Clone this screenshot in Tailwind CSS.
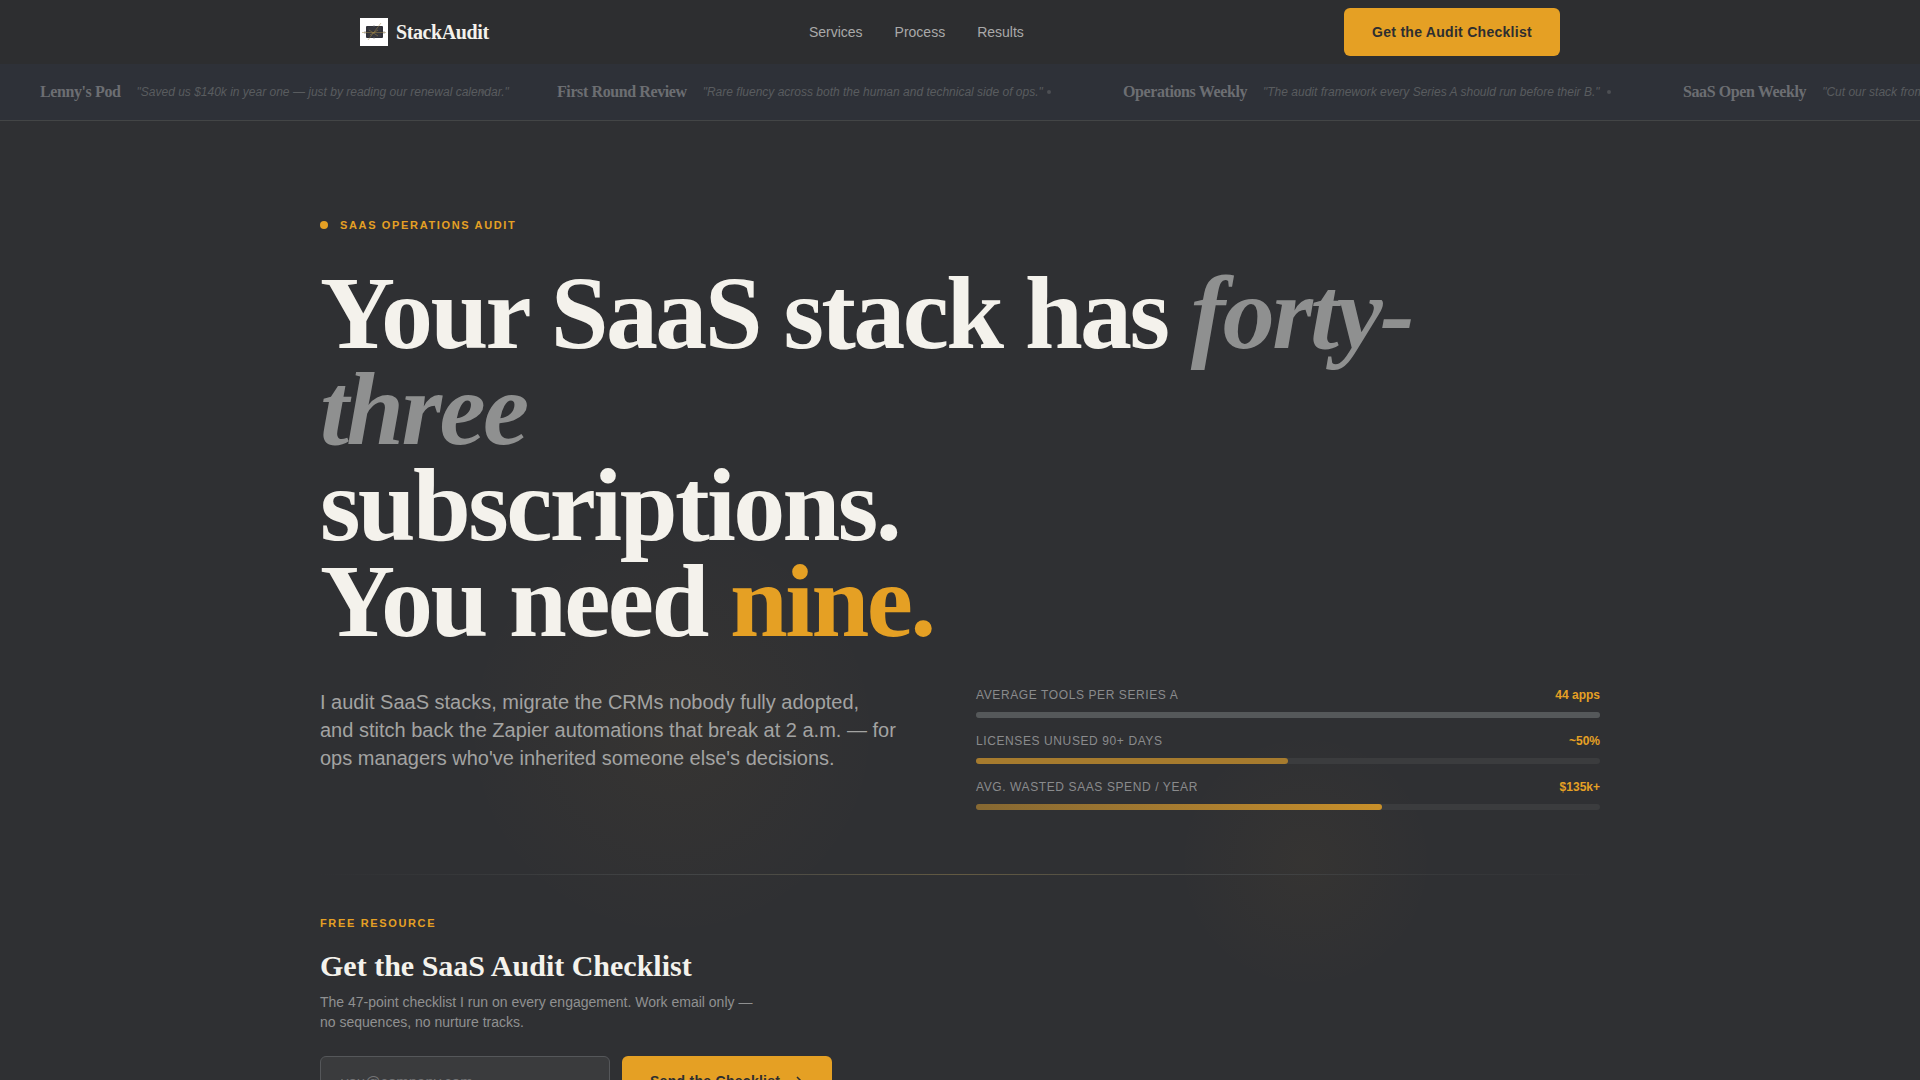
<!DOCTYPE html>
<html lang="en">
  <head>
    <meta charset="utf-8">
    <meta name="viewport" content="width=device-width, initial-scale=1">
    <title>StackAudit</title>
    <script src="https://cdn.jsdelivr.net/npm/@tailwindcss/browser@4"></script>
  </head>
  <body class="h-screen overflow-hidden bg-[#2f3033] font-['Liberation_Sans',sans-serif] text-[#f4f2ec]">

    <header class="bg-[#2d2e30]">
      <nav class="mx-auto flex h-16 max-w-[1200px] items-center justify-between">
        <a href="#" class="flex items-center gap-2 font-['Liberation_Serif',serif] text-xl font-bold tracking-[-0.4px]">
          <svg class="size-7 bg-white" viewBox="0 0 28 28" aria-hidden="true">
            <rect x="6" y="8" width="17" height="12" rx="1" fill="#303138"/>
            <path d="M8 10h13M8 12h13M8 16h13M8 18h13" stroke="#45434a" stroke-width=".6"/>
            <path d="M2 14.500h24M8 22l13-17M10 17l8-5M9 12l9 6" stroke="#a58a4a" stroke-width=".5" fill="none"/>
            <path d="M13 8h2M13 20h2M5 13v3M24 13v3" stroke="#777" stroke-width=".6"/>
          </svg>
          StackAudit
        </a>
        <div class="flex gap-8 text-sm text-[#a9a9a9]">
          <a href="#services" class="hover:text-white">Services</a>
          <a href="#process" class="hover:text-white">Process</a>
          <a href="#results" class="hover:text-white">Results</a>
        </div>
        <a href="#checklist" class="flex h-12 items-center rounded-md bg-[#e5a024] px-7 text-sm font-bold tracking-[0.28px] text-[#2d2e30]">Get the Audit Checklist</a>
      </nav>
    </header>

    <!-- press quotes -->
    <section class="overflow-hidden border-b border-[#434546] bg-[#2e3138]">
      <ul class="flex h-14 items-center pl-10 whitespace-nowrap text-xs text-[#595c5f] italic">
        <li class="relative flex w-[517px] shrink-0 items-center gap-4">
          <b class="font-['Liberation_Serif',serif] text-base tracking-tight text-[#6c6e72] not-italic">Lenny's Pod</b>
          <span>"Saved us $140k in year one — just by reading our renewal calendar."</span>
          <i class="absolute right-[72px] size-1 rounded-full bg-[#4c4f53]"></i>
        </li>
        <li class="relative flex w-[566px] shrink-0 items-center gap-4">
          <b class="font-['Liberation_Serif',serif] text-base tracking-tight text-[#6c6e72] not-italic">First Round Review</b>
          <span>"Rare fluency across both the human and technical side of ops."</span>
          <i class="absolute right-[72px] size-1 rounded-full bg-[#4c4f53]"></i>
        </li>
        <li class="relative flex w-[560px] shrink-0 items-center gap-4">
          <b class="font-['Liberation_Serif',serif] text-base tracking-tight text-[#6c6e72] not-italic">Operations Weekly</b>
          <span>"The audit framework every Series A should run before their B."</span>
          <i class="absolute right-[72px] size-1 rounded-full bg-[#4c4f53]"></i>
        </li>
        <li class="relative flex shrink-0 items-center gap-4">
          <b class="font-['Liberation_Serif',serif] text-base tracking-tight text-[#6c6e72] not-italic">SaaS Open Weekly</b>
          <span>"Cut our stack from</span>
        </li>
      </ul>
    </section>

    <main class="bg-[radial-gradient(circle_at_35%_610px,rgba(229,160,36,0.04),transparent_210px),radial-gradient(circle_at_68%_740px,rgba(229,160,36,0.035),transparent_130px)]">
      <div class="mx-auto max-w-[1280px] pt-24">
        <p class="flex items-center gap-3 text-[11px] leading-4 font-bold tracking-[0.15em] text-[#e5a024]">
          <span class="size-2 rounded-full bg-[#e5a024]"></span>
          SAAS OPERATIONS AUDIT
        </p>

        <h1 class="mt-8 max-w-[1200px] font-['Liberation_Serif',serif] text-[104px] leading-[96px] font-bold tracking-tight">
          Your SaaS stack has <em class="text-[#8f9090]">forty-three</em><br>
          subscriptions.<br>
          You need <span class="text-[#e5a024]">nine.</span>
        </h1>

        <div class="mt-[39px] grid grid-cols-2 gap-8">
          <p class="max-w-[577px] text-xl leading-7 text-[#a3a3a2]">I audit SaaS stacks, migrate the CRMs nobody fully adopted, and stitch back the Zapier automations that break at 2 a.m. — for ops managers who've inherited someone else's decisions.</p>

          <div class="flex flex-col gap-4 text-xs leading-[14px]">
            <div>
              <div class="mb-[10px] flex justify-between">
                <span class="tracking-[0.6px] text-[#8a8b8d]">AVERAGE TOOLS PER SERIES A</span>
                <b class="text-[#e5a024]">44 apps</b>
              </div>
              <div class="h-[6px] rounded-[3px] bg-[#3b3c3e]">
                <div class="h-full rounded-[3px] bg-[#55585a]" style="width: 100%"></div>
              </div>
            </div>
            <div>
              <div class="mb-[10px] flex justify-between">
                <span class="tracking-[0.6px] text-[#8a8b8d]">LICENSES UNUSED 90+ DAYS</span>
                <b class="text-[#e5a024]">~50%</b>
              </div>
              <div class="h-[6px] rounded-[3px] bg-[#3b3c3e]">
                <div class="h-full rounded-[3px] bg-[#a67b2e]" style="width: 50%"></div>
              </div>
            </div>
            <div>
              <div class="mb-[10px] flex justify-between">
                <span class="tracking-[0.6px] text-[#8a8b8d]">AVG. WASTED SAAS SPEND / YEAR</span>
                <b class="text-[#e5a024]">$135k+</b>
              </div>
              <div class="h-[6px] rounded-[3px] bg-[#3b3c3e]">
                <div class="h-full rounded-[3px] bg-linear-to-r from-[#866832] to-[#c99029]" style="width: 65%"></div>
              </div>
            </div>
          </div>
        </div>

        <div class="mt-16 h-px bg-[linear-gradient(to_right,transparent,#434546_30%,#635a42_50%,#434546_70%,transparent)]"></div>

        <section id="checklist" class="pt-10">
          <p class="text-[11px] leading-4 font-bold tracking-[0.15em] text-[#e5a024]">FREE RESOURCE</p>
          <h2 class="mt-[15px] font-['Liberation_Serif',serif] text-3xl leading-10 font-bold">Get the SaaS Audit Checklist</h2>
          <p class="mt-[6px] max-w-[440px] text-sm leading-5 text-[#8f9091]">The 47-point checklist I run on every engagement. Work email only — no sequences, no nurture tracks.</p>
          <form class="mt-6 flex gap-3 pb-16">
            <input type="email" aria-label="Work email" placeholder="you@company.com" class="h-[50px] w-[290px] rounded-md border border-[#55575a] bg-[#3a3b3d] px-5 text-[15px] placeholder:text-[#727375]">
            <button type="submit" class="flex h-[50px] items-center gap-2 rounded-md bg-[#e5a024] px-7 text-sm font-bold tracking-[0.28px] text-[#2d2e30]">
              Send the Checklist
              <svg class="size-4" viewBox="0 0 16 16" fill="none" stroke="currentColor" stroke-width="1.500" aria-hidden="true"><path d="M2 8h11M9 4l4 4-4 4"/></svg>
            </button>
          </form>
        </section>
      </div>
    </main>

  </body>
</html>
